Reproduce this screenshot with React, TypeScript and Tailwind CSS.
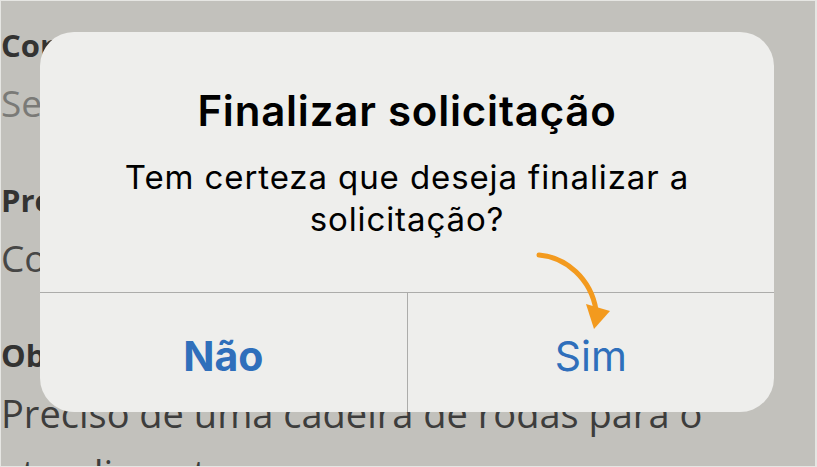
import React from 'react';

const labelCls = 'text-[31px] leading-[40px] font-bold text-[#333332] whitespace-nowrap';
const valueCls = 'text-[37px] leading-[56px] whitespace-nowrap';

function Field({ label, value, valueColor, wrap }: { label: string; value: string; valueColor: string; wrap?: boolean }) {
  return (
    <div className={`flex flex-col ${wrap ? 'gap-[8px]' : 'gap-[10px]'}`}>
      <p className={labelCls}>{label}</p>
      <p className={`${wrap ? 'text-[38px] leading-[60px] w-[730px]' : valueCls} ${valueColor}`}>{value}</p>
    </div>
  );
}

function ConfirmDialog() {
  return (
    <div className="absolute left-[39px] top-[31px] w-[734px] h-[380px] rounded-[34px] bg-[#eeeeec] flex flex-col overflow-hidden font-['Inter',sans-serif]">
      <div className="h-[260px] flex flex-col items-center pt-[55px] text-black">
        <h2 className="text-[42px] leading-[48px] font-semibold tracking-[0.8px]">Finalizar solicitação</h2>
        <p className="mt-[21px] text-[33px] leading-[42px] tracking-[0.9px] text-center w-[600px]">
          Tem certeza que deseja finalizar a solicitação?
        </p>
      </div>
      <div className="h-px bg-[#acacaa]" />
      <div className="flex flex-1">
        <button className="flex-1 flex items-center justify-center pt-[7px] text-[41px] leading-[48px] font-bold text-[#2f6fbb]">
          Não
        </button>
        <div className="w-px bg-[#acacaa]" />
        <button className="flex-1 flex items-center justify-center pt-[7px] text-[41px] leading-[48px] text-[#2f6fbb]">
          Sim
        </button>
      </div>
    </div>
  );
}

export default function App() {
  return (
    <div className="relative w-[817px] h-[467px] overflow-hidden bg-[#c2c1bc] border border-[#e6e6e3] border-r-2 font-['Open_Sans',sans-serif]">
      <div className="flex flex-col gap-[49px] pt-[24px]">
        <Field label="Corredor" value="Selecione" valueColor="text-[#7a7a77]" />
        <Field label="Procedimento" value="Consulta" valueColor="text-[#474746]" />
        <Field
          label="Observação"
          value="Preciso de uma cadeira de rodas para o atendimento."
          valueColor="text-[#3d3d3c]"
          wrap
        />
      </div>

      <ConfirmDialog />

      <svg
        className="absolute left-[530px] top-[245px] w-[90px] h-[90px]"
        viewBox="530 245 90 90"
        fill="none"
      >
        <path d="M538 254 C565 256 590 278 595 309" stroke="#f39a1e" strokeWidth="5" strokeLinecap="round" />
        <path d="M585 303 L609 310 L593 328 Z" fill="#f39a1e" />
      </svg>
    </div>
  );
}
